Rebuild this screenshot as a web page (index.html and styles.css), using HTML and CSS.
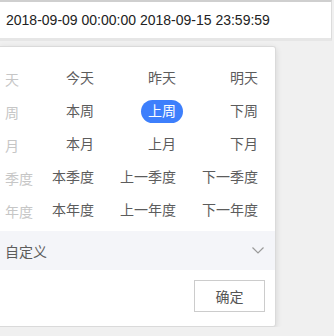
FILE: index.html
```html
<!DOCTYPE html>
<html lang="zh-CN">
<head>
  <meta charset="UTF-8" />
  <meta name="viewport" content="width=device-width, initial-scale=1.0"/>
  <title>日期范围</title>
  <link rel="stylesheet" href="styles.css">
</head>
<body>
  <div class="range-field">2018-09-09 00:00:00 2018-09-15 23:59:59</div>

  <div class="range-panel">
    <div class="quick-grid">
      <span class="quick-label">天</span>
      <span class="quick-cell"><span class="quick-item">今天</span></span>
      <span class="quick-cell"><span class="quick-item">昨天</span></span>
      <span class="quick-cell"><span class="quick-item">明天</span></span>

      <span class="quick-label">周</span>
      <span class="quick-cell"><span class="quick-item">本周</span></span>
      <span class="quick-cell"><span class="quick-item active">上周</span></span>
      <span class="quick-cell"><span class="quick-item">下周</span></span>

      <span class="quick-label">月</span>
      <span class="quick-cell"><span class="quick-item">本月</span></span>
      <span class="quick-cell"><span class="quick-item">上月</span></span>
      <span class="quick-cell"><span class="quick-item">下月</span></span>

      <span class="quick-label">季度</span>
      <span class="quick-cell"><span class="quick-item">本季度</span></span>
      <span class="quick-cell"><span class="quick-item">上一季度</span></span>
      <span class="quick-cell"><span class="quick-item">下一季度</span></span>

      <span class="quick-label">年度</span>
      <span class="quick-cell"><span class="quick-item">本年度</span></span>
      <span class="quick-cell"><span class="quick-item">上一年度</span></span>
      <span class="quick-cell"><span class="quick-item">下一年度</span></span>
    </div>

    <div class="custom-row">
      <span>自定义</span>
      <svg class="chevron" width="12" height="7" viewBox="0 0 12 7">
        <polyline points="0.5,0.5 6,6 11.5,0.5" fill="none" stroke="#9a9a9a" stroke-width="1.2"/>
      </svg>
    </div>

    <div class="panel-footer">
      <button class="ok-button">确定</button>
    </div>
  </div>
</body>
</html>
```

FILE: styles.css
```css
body {
  margin: 0;
  background-color: #f0f0f0;
  font-family: "Liberation Sans", "Noto Sans CJK SC", sans-serif;
  font-size: 14px;
  overflow: hidden;
}

.range-field {
  height: 36px;
  line-height: 36px;
  padding-left: 6px;
  background-color: #fff;
  color: #222;
  border-top: 2px solid #cfcfcf;
  border-right: 1px solid #dcdcdc;
  border-bottom: 3px solid #e6e6e6;
  width: 325px;
}

.range-panel {
  margin-top: 5px;
  width: 275px;
  background-color: #fff;
  border: 1px solid #dadada;
  border-left: none;
  border-radius: 0 3px 3px 0;
  box-shadow: 0 2px 6px rgba(0, 0, 0, 0.12);
}

.quick-grid {
  display: grid;
  grid-template-columns: 14px repeat(3, 82px);
  grid-auto-rows: 33px;
  align-items: center;
  padding: 15px 0 4px 5px;
}

.quick-label {
  color: #c6c6c6;
  white-space: nowrap;
}

.quick-cell {
  display: flex;
  justify-content: flex-end;
}

.quick-item {
  display: inline-block;
  height: 23px;
  line-height: 23px;
  padding: 0 7px;
  border-radius: 12px;
  color: #5c5c5c;
  white-space: nowrap;
}

.quick-item.active {
  background-color: #3d7ffc;
  color: #fff;
}

.custom-row {
  display: flex;
  justify-content: space-between;
  align-items: center;
  height: 39px;
  padding: 0 11px 0 5px;
  background-color: #f4f5f9;
  color: #5c5c5c;
}

.panel-footer {
  display: flex;
  justify-content: flex-end;
  padding: 10px 10px 14px;
}

.ok-button {
  width: 71px;
  height: 32px;
  background-color: #fff;
  border: 1px solid #cccccc;
  border-radius: 0;
  color: #555;
  font-family: inherit;
  font-size: 14px;
  cursor: pointer;
}
```
